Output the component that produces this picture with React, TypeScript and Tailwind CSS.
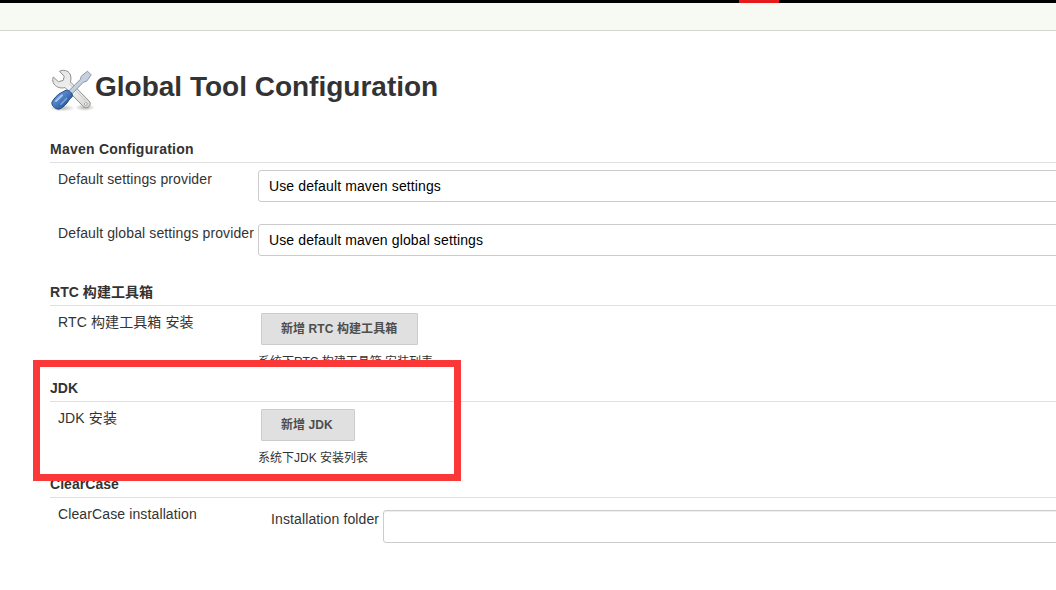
import type { ReactNode } from "react";

function ToolsIcon() {
  return (
    <svg width="48" height="48" viewBox="0 0 48 48" className="block shrink-0">
      <defs>
        <linearGradient id="steel" x1="0" y1="0" x2="1" y2="1">
          <stop offset="0" stopColor="#dededc" />
          <stop offset="0.5" stopColor="#f3f3f2" />
          <stop offset="1" stopColor="#d3d4d1" />
        </linearGradient>
        <linearGradient id="handle" x1="0.1" y1="0.2" x2="0.8" y2="0.9">
          <stop offset="0" stopColor="#6c98d4" />
          <stop offset="0.45" stopColor="#4a7dc4" />
          <stop offset="1" stopColor="#204a87" />
        </linearGradient>
        <radialGradient id="shade">
          <stop offset="0" stopColor="#000" stopOpacity="0.3" />
          <stop offset="1" stopColor="#000" stopOpacity="0" />
        </radialGradient>
      </defs>
      <ellipse cx="12" cy="41" rx="13" ry="3.5" fill="url(#shade)" />
      <ellipse cx="35" cy="40.5" rx="10" ry="3.5" fill="url(#shade)" />
      <path
        d="M9.5 4.2C13 2.5 18 3.2 20 7C21.3 9.7 21 12.7 20.4 15L39.3 34.2C41.6 36.8 39.5 41.2 35.5 40.6C34.2 40.4 33.4 39.7 32.6 38.8L15 20.5C10.5 22 5 19.9 3.3 15.7C2.4 13.7 2.6 11.6 3.3 10L8.4 14.7L13.2 13.4L14.2 9.4Z"
        fill="url(#steel)"
        stroke="#8d8f8b"
        strokeWidth="1"
        strokeLinejoin="round"
      />
      <path d="M19 16.5L36 34" stroke="#c9cbc7" strokeWidth="1" />
      <circle cx="35.8" cy="37" r="1.4" fill="#fff" stroke="#8d8f8b" strokeWidth="0.7" />
      <path
        d="M31.3 9.2L37.5 4.2L41.2 7.9L36.6 14.3L33.4 15.2L20.8 28L17.8 25L30.4 12.3Z"
        fill="#c6d0de"
        stroke="#8896aa"
        strokeWidth="1"
        strokeLinejoin="round"
      />
      <path
        d="M16.2 23.3C19 22.8 22.8 26.3 22.4 29.2C21.8 31 19.8 31.4 19 33C17 36.8 13.6 39.8 10.2 41.8C6.8 43.4 0.8 39.2 2 35C4.4 31 7.6 27.4 11.4 25.6C13.5 24.9 14.5 23.6 16.2 23.3Z"
        fill="url(#handle)"
        stroke="#204a87"
        strokeWidth="1"
      />
      <path d="M6 34L12 28.3" stroke="#a9c6ee" strokeWidth="2" strokeLinecap="round" />
      <path d="M11 37.2L16.5 31.4" stroke="#7fa6dc" strokeWidth="1.5" strokeLinecap="round" />
    </svg>
  );
}

function SectionTitle({ children, spacing = "tracking-[0.05px]" }: { children: ReactNode; spacing?: string }) {
  return (
    <h2 className={`h-[28px] border-b border-[#dfdfdf] text-[14px] leading-[28px] font-bold ${spacing}`}>
      {children}
    </h2>
  );
}

function Select({ value }: { value: string }) {
  return (
    <div className="h-8 w-[900px] shrink-0 rounded-[3px] border border-[#ccc] bg-white pl-[10px] text-[14px] leading-[30px] text-black">
      {value}
    </div>
  );
}

function Row({ label, children }: { label: string; children: ReactNode }) {
  return (
    <div className="flex pl-2">
      <div className="w-[200px] shrink-0 leading-[18px]">{label}</div>
      {children}
    </div>
  );
}

function Installer({ action, note, width }: { action: string; note: string; width: string }) {
  return (
    <div className="flex flex-col items-start">
      <button
        className={`ml-[3px] h-8 rounded-[1px] border border-[#ccc] bg-[#e0e0e0] pl-[19px] text-left text-[12px] leading-[30px] font-bold tracking-[0.08px] text-[#4d4d4d] ${width}`}
      >
        {action}
      </button>
      <div className="mt-2 text-[12px] leading-[18px] tracking-normal">{note}</div>
    </div>
  );
}

export default function App() {
  return (
    <div className="relative h-[590px] w-[1056px] overflow-hidden bg-white font-['Liberation_Sans','Noto_Sans_CJK_SC',sans-serif] text-[14px] tracking-[0.12px] whitespace-nowrap text-[#333]">
      <header className="h-[3px] bg-black pl-[739px]">
        <div className="h-[3px] w-10 bg-[#e8191b]" />
      </header>
      <nav className="h-7 border-b border-[#d3d7cf] bg-[#f6faf2]" />

      <main className="pl-[50px]">
        <div className="flex h-[104px] pt-[36px]">
          <ToolsIcon />
          <h1 className="-ml-[3px] h-10 text-[28px] leading-[39px] font-bold tracking-normal">
            Global Tool Configuration
          </h1>
        </div>

        <section className="h-[143px]">
          <SectionTitle spacing="tracking-[0.24px]">Maven Configuration</SectionTitle>
          <div className="flex flex-col gap-[22px] pt-[7px]">
            <Row label="Default settings provider">
              <Select value="Use default maven settings" />
            </Row>
            <Row label="Default global settings provider">
              <Select value="Use default maven global settings" />
            </Row>
          </div>
        </section>

        <section className="h-[96px]">
          <SectionTitle>RTC 构建工具箱</SectionTitle>
          <div className="pt-[7px]">
            <Row label="RTC 构建工具箱 安装">
              <Installer action="新增 RTC 构建工具箱" note="系统下RTC 构建工具箱 安装列表" width="w-[157px]" />
            </Row>
          </div>
        </section>

        <section className="h-[96px]">
          <SectionTitle>JDK</SectionTitle>
          <div className="pt-[7px]">
            <Row label="JDK 安装">
              <Installer action="新增 JDK" note="系统下JDK 安装列表" width="w-[94px]" />
            </Row>
          </div>
        </section>

        <section>
          <SectionTitle>ClearCase</SectionTitle>
          <div className="pt-[7px]">
            <Row label="ClearCase installation">
              <div className="flex pt-[5px] pl-[13px]">
                <label className="w-[112px] leading-[18px]">Installation folder</label>
                <input className="h-[33px] w-[800px] shrink-0 rounded-[3px] border border-[#ccc] shadow-[inset_0_1px_1px_rgba(0,0,0,0.075)]" />
              </div>
            </Row>
          </div>
        </section>
      </main>

      <div className="pointer-events-none absolute top-[360px] left-[33px] h-[121px] w-[428px] border-[7px] border-[#fb3838]" />
    </div>
  );
}
